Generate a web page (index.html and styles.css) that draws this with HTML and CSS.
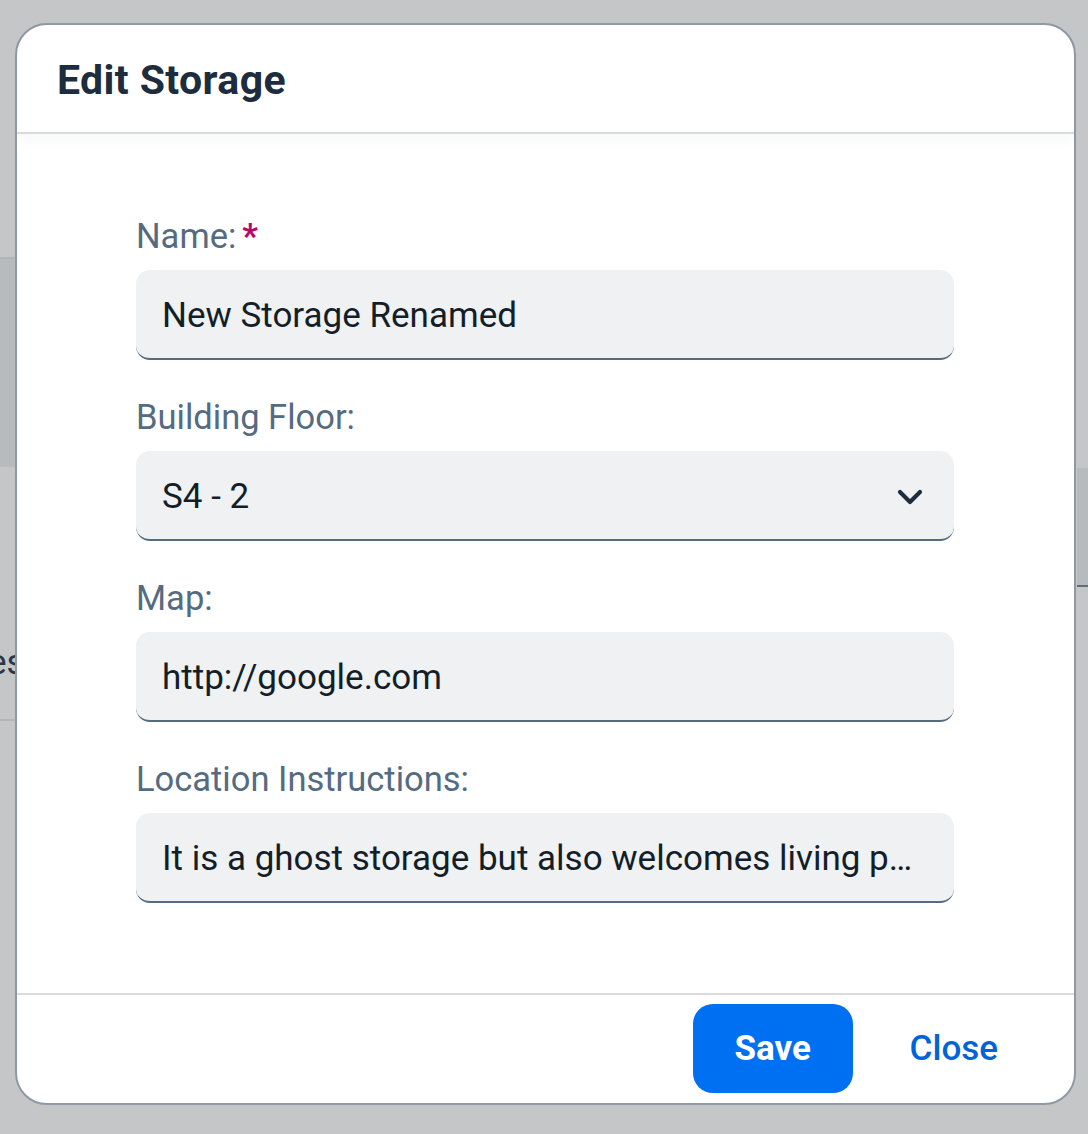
FILE: index.html
```html
<!DOCTYPE html>
<html lang="en">
<head>
<meta charset="utf-8">
<title>Edit Storage</title>
<link rel="stylesheet" href="styles.css">
</head>
<body>
<div class="backdrop">
  <span class="bg-text">es</span>
</div>
<div class="dialog" role="dialog" aria-labelledby="dlg-title">
  <header class="dialog-header">
    <h1 id="dlg-title" class="dialog-title">Edit Storage</h1>
  </header>
  <main class="dialog-content">
    <div class="field">
      <label class="field-label">Name:<span class="required">*</span></label>
      <div class="input"><span class="input-text">New Storage Renamed</span></div>
    </div>
    <div class="field">
      <label class="field-label">Building Floor:</label>
      <div class="input select">
        <span class="input-text">S4 - 2</span>
        <svg class="chevron" width="26" height="16" viewBox="0 0 26 16" aria-hidden="true"><polyline points="3,3 13,13 23,3" fill="none" stroke="#1d2d3e" stroke-width="4.2" stroke-linecap="round" stroke-linejoin="round"/></svg>
      </div>
    </div>
    <div class="field">
      <label class="field-label">Map:</label>
      <div class="input"><span class="input-text">http://google.com</span></div>
    </div>
    <div class="field">
      <label class="field-label">Location Instructions:</label>
      <div class="input"><span class="input-text">It is a ghost storage but also welcomes living people who want to store their things</span></div>
    </div>
  </main>
  <footer class="dialog-footer">
    <button class="btn btn-emph">Save</button>
    <button class="btn btn-transparent">Close</button>
  </footer>
</div>
</body>
</html>
```

FILE: styles.css
```css
html, body {
  margin: 0;
  padding: 0;
}
body {
  width: 1088px;
  height: 1134px;
  overflow: hidden;
  font-family: Roboto, "Liberation Sans", Arial, sans-serif;
  background:
    linear-gradient(#b1b4b8, #b1b4b8) 0 257px / 15px 2px no-repeat,
    linear-gradient(#b8bbbe, #b8bbbe) 0 259px / 15px 208px no-repeat,
    linear-gradient(#b1b4b8, #b1b4b8) 0 719px / 15px 2px no-repeat,
    linear-gradient(#5f6f80, #5f6f80) 1077px 585px / 11px 2px no-repeat,
    linear-gradient(#b8bbbe, #b8bbbe) 1077px 468px / 11px 117px no-repeat,
    #c4c6c8;
  position: relative;
}
.backdrop {
  position: absolute;
  inset: 0;
  pointer-events: none;
}
.bg-text {
  position: absolute;
  left: -12px;
  top: 642px;
  font-size: 35px;
  color: #2a3744;
}
.dialog {
  position: relative;
  box-sizing: border-box;
  margin: 23px 0 0 15px;
  width: 1061px;
  height: 1082px;
  border: 2px solid #8e99a5;
  border-radius: 32px;
  background: #ffffff;
  display: flex;
  flex-direction: column;
  overflow: hidden;
}
.dialog-header {
  flex: 0 0 auto;
  height: 109px;
  box-sizing: border-box;
  border-bottom: 2px solid #d9dadb;
  display: flex;
  align-items: center;
  padding-left: 40px;
  box-shadow: 0 6px 14px rgba(34, 53, 72, 0.04);
  position: relative;
  z-index: 1;
}
.dialog-title {
  margin: 0;
  font-size: 41px;
  font-weight: 700;
  color: #1d2d3e;
  line-height: 1;
  letter-spacing: 0.4px;
  padding-top: 4px;
}
.dialog-content {
  flex: 1 1 auto;
  padding: 84px 120px 0 119px;
  display: flex;
  flex-direction: column;
  gap: 39px;
}
.field {
  display: flex;
  flex-direction: column;
  gap: 16px;
}
.field-label {
  font-size: 34.5px;
  line-height: 36px;
  color: #556b82;
  height: 36px;
}
.required {
  color: #ba066c;
  font-weight: 700;
  margin-left: 6px;
}
.input {
  box-sizing: border-box;
  height: 90px;
  background: #eff1f2;
  border-bottom: 2px solid #556b82;
  border-radius: 14px;
  padding: 0 26px 0 26px;
  display: flex;
  align-items: center;
  font-size: 35px;
  color: #131e29;
  min-width: 0;
}
.input-text {
  flex: 1 1 auto;
  min-width: 0;
  white-space: nowrap;
  overflow: hidden;
  text-overflow: ellipsis;
  padding-top: 3px;
}
.select {
  padding-right: 31px;
}
.chevron {
  flex: 0 0 auto;
  margin-left: 12px;
  margin-top: 4px;
}
.dialog-footer {
  flex: 0 0 auto;
  height: 110px;
  box-sizing: border-box;
  border-top: 2px solid #d9dadb;
  display: flex;
  justify-content: flex-end;
  align-items: center;
  gap: 16px;
  padding: 0 35px 2px 0;
}
.btn {
  font-family: inherit;
  font-size: 35px;
  height: 89px;
  border: none;
  border-radius: 20px;
  cursor: pointer;
}
.btn-emph {
  width: 160px;
  background: #0070f2;
  color: #ffffff;
  font-weight: 700;
}
.btn-transparent {
  padding: 0 41px;
  background: transparent;
  color: #0064d9;
  font-weight: 500;
}
```
